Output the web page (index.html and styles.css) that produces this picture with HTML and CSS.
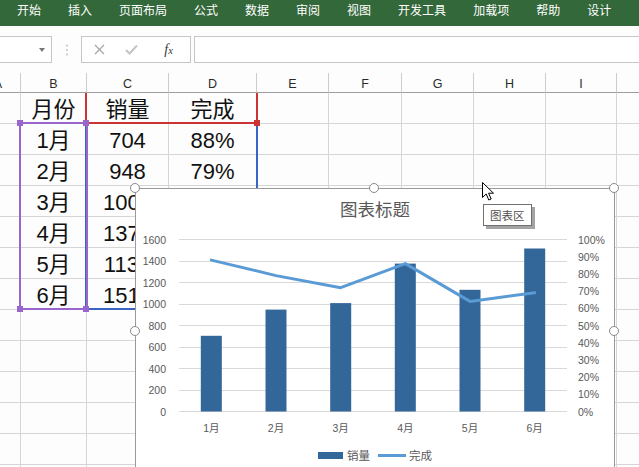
FILE: index.html
```html
<!DOCTYPE html>
<html lang="zh-CN">
<head>
<meta charset="utf-8">
<title>Excel 图表</title>
<link rel="stylesheet" href="styles.css">
</head>
<body>
<div class="ribbon">
  <span>开始</span><span>插入</span><span>页面布局</span><span>公式</span><span>数据</span><span>审阅</span><span>视图</span><span>开发工具</span><span>加载项</span><span>帮助</span><span>设计</span>
</div>
<div class="fbar">
  <div class="namebox"><span class="caret"></span></div>
  <div class="vdots"><svg width="4" height="12" viewBox="0 0 4 12"><circle cx="2" cy="1.5" r="1" /><circle cx="2" cy="6" r="1" /><circle cx="2" cy="10.5" r="1" /></svg></div>
  <div class="fbtns">
    <span class="fbtn"><svg width="11" height="11" viewBox="0 0 11 11"><path d="M1 1L10 10M10 1L1 10" class="ico-x"/></svg></span>
    <span class="fbtn"><svg width="13" height="11" viewBox="0 0 13 11"><path d="M1 6L4.5 9.5L12 1.5" class="ico-ok"/></svg></span>
    <span class="fbtn wide"><span class="fx">f<span class="fxsub">x</span></span></span>
  </div>
  <div class="finput"></div>
</div>
<div class="sheet">
  <div class="grid">
    <div class="ch">A</div><div class="ch">B</div><div class="ch">C</div><div class="ch">D</div><div class="ch">E</div><div class="ch">F</div><div class="ch">G</div><div class="ch">H</div><div class="ch">I</div><div class="ch"></div>

    <div class="c"></div><div class="c">月份</div><div class="c">销量</div><div class="c">完成</div><div class="c"></div><div class="c"></div><div class="c"></div><div class="c"></div><div class="c"></div><div class="c"></div>
    <div class="c"></div><div class="c">1月</div><div class="c">704</div><div class="c">88%</div><div class="c"></div><div class="c"></div><div class="c"></div><div class="c"></div><div class="c"></div><div class="c"></div>
    <div class="c"></div><div class="c">2月</div><div class="c">948</div><div class="c">79%</div><div class="c"></div><div class="c"></div><div class="c"></div><div class="c"></div><div class="c"></div><div class="c"></div>
    <div class="c"></div><div class="c">3月</div><div class="c">1008</div><div class="c">72%</div><div class="c"></div><div class="c"></div><div class="c"></div><div class="c"></div><div class="c"></div><div class="c"></div>
    <div class="c"></div><div class="c">4月</div><div class="c">1376</div><div class="c">86%</div><div class="c"></div><div class="c"></div><div class="c"></div><div class="c"></div><div class="c"></div><div class="c"></div>
    <div class="c"></div><div class="c">5月</div><div class="c">1132</div><div class="c">64%</div><div class="c"></div><div class="c"></div><div class="c"></div><div class="c"></div><div class="c"></div><div class="c"></div>
    <div class="c"></div><div class="c">6月</div><div class="c">1516</div><div class="c">69%</div><div class="c"></div><div class="c"></div><div class="c"></div><div class="c"></div><div class="c"></div><div class="c"></div>
    <div class="c"></div><div class="c"></div><div class="c"></div><div class="c"></div><div class="c"></div><div class="c"></div><div class="c"></div><div class="c"></div><div class="c"></div><div class="c"></div>
    <div class="c"></div><div class="c"></div><div class="c"></div><div class="c"></div><div class="c"></div><div class="c"></div><div class="c"></div><div class="c"></div><div class="c"></div><div class="c"></div>
    <div class="c"></div><div class="c"></div><div class="c"></div><div class="c"></div><div class="c"></div><div class="c"></div><div class="c"></div><div class="c"></div><div class="c"></div><div class="c"></div>
    <div class="c"></div><div class="c"></div><div class="c"></div><div class="c"></div><div class="c"></div><div class="c"></div><div class="c"></div><div class="c"></div><div class="c"></div><div class="c"></div>
    <div class="c"></div><div class="c"></div><div class="c"></div><div class="c"></div><div class="c"></div><div class="c"></div><div class="c"></div><div class="c"></div><div class="c"></div><div class="c"></div>
    <div class="c"></div><div class="c"></div><div class="c"></div><div class="c"></div><div class="c"></div><div class="c"></div><div class="c"></div><div class="c"></div><div class="c"></div><div class="c"></div>
  </div>

  <div class="sel sel-blue"></div>
  <div class="sel sel-red"></div>
  <div class="sel sel-purple"></div>
  <span class="hd hd-purple hp1"></span>
  <span class="hd hd-purple hp2"></span>
  <span class="hd hd-purple hp3"></span>
  <span class="hd hd-purple hp4"></span>
  <span class="hd hd-red hr1"></span>

  <div class="chart">
    <div class="ctitle">图表标题</div>
    <svg class="plot" width="478" height="215" viewBox="0 0 478 215">
      <g class="gridl">
        <line x1="43" x2="431" y1="10.5" y2="10.5"/>
        <line x1="43" x2="431" y1="32" y2="32"/>
        <line x1="43" x2="431" y1="53.5" y2="53.5"/>
        <line x1="43" x2="431" y1="75" y2="75"/>
        <line x1="43" x2="431" y1="96.5" y2="96.5"/>
        <line x1="43" x2="431" y1="118" y2="118"/>
        <line x1="43" x2="431" y1="139.5" y2="139.5"/>
        <line x1="43" x2="431" y1="161" y2="161"/>
        <line x1="43" x2="431" y1="182.5" y2="182.5"/>
      </g>
      <g class="axl">
        <text x="30" y="10.5">1600</text>
        <text x="30" y="32">1400</text>
        <text x="30" y="53.5">1200</text>
        <text x="30" y="75">1000</text>
        <text x="30" y="96.5">800</text>
        <text x="30" y="118">600</text>
        <text x="30" y="139.5">400</text>
        <text x="30" y="161">200</text>
        <text x="30" y="182.5">0</text>
      </g>
      <g class="axr">
        <text x="442" y="10.5">100%</text>
        <text x="442" y="27.7">90%</text>
        <text x="442" y="44.9">80%</text>
        <text x="442" y="62.1">70%</text>
        <text x="442" y="79.3">60%</text>
        <text x="442" y="96.5">50%</text>
        <text x="442" y="113.7">40%</text>
        <text x="442" y="130.9">30%</text>
        <text x="442" y="148.1">20%</text>
        <text x="442" y="165.3">10%</text>
        <text x="442" y="182.5">0%</text>
      </g>
      <g class="bars">
        <rect x="64.8" y="106.8" width="21" height="75.7"/>
        <rect x="129.5" y="80.6" width="21" height="101.9"/>
        <rect x="194.2" y="74.1" width="21" height="108.4"/>
        <rect x="258.8" y="34.6" width="21" height="147.9"/>
        <rect x="323.5" y="60.8" width="21" height="121.7"/>
        <rect x="388.2" y="19.5" width="21" height="163"/>
      </g>
      <polyline class="pline" points="75.3,31.1 140,46.6 204.7,58.7 269.3,34.6 334,72.4 398.7,63.8"/>
      <g class="axx">
        <text x="75.3" y="199">1月</text>
        <text x="140" y="199">2月</text>
        <text x="204.7" y="199">3月</text>
        <text x="269.3" y="199">4月</text>
        <text x="334" y="199">5月</text>
        <text x="398.7" y="199">6月</text>
      </g>
    </svg>
    <div class="legend">
      <span class="lg-bar"></span><span class="lg-t">销量</span>
      <span class="lg-line"></span><span class="lg-t">完成</span>
    </div>
  </div>
  <span class="ch-h h1"></span>
  <span class="ch-h h2"></span>
  <span class="ch-h h3"></span>
  <span class="ch-h h4"></span>
  <span class="ch-h h5"></span>

  <svg class="cursor" width="13" height="20" viewBox="0 0 13 20"><path d="M0.5 0.5L0.5 15.5L4.2 12L6.8 18L9.2 17L6.6 11.2L11.5 11.2Z"/></svg>
  <div class="tip">图表区</div>
</div>
</body>
</html>
```

FILE: styles.css
```css
html, body {
  margin: 0;
  padding: 0;
}
body {
  width: 639px;
  height: 467px;
  overflow: hidden;
  background: #fcfdfc;
  font-family: "Liberation Sans", "Noto Sans CJK SC", sans-serif;
}

/* ribbon */
.ribbon {
  display: flex;
  gap: 27px;
  height: 26px;
  padding-left: 17px;
  background: #33683a;
  color: #ffffff;
  font-family: "Noto Sans CJK SC", sans-serif;
  font-size: 12px;
  line-height: 20px;
  white-space: nowrap;
}

/* formula bar */
.fbar {
  display: flex;
  height: 27px;
  margin-top: 10px;
}
.namebox {
  box-sizing: border-box;
  width: 53px;
  margin-left: -1px;
  border: 1px solid #c6c6c6;
  background: #ffffff;
  display: flex;
  justify-content: flex-end;
  align-items: center;
  padding-right: 6px;
}
.caret {
  width: 0;
  height: 0;
  border-left: 3.5px solid transparent;
  border-right: 3.5px solid transparent;
  border-top: 4px solid #777777;
}
.vdots {
  width: 29px;
  display: flex;
  justify-content: center;
  align-items: center;
}
.vdots svg {
  fill: #c2c2c2;
}
.fbtns {
  box-sizing: border-box;
  width: 110px;
  border: 1px solid #c6c6c6;
  background: #ffffff;
  display: flex;
  padding-left: 2px;
}
.fbtn {
  width: 33px;
  display: flex;
  justify-content: center;
  align-items: center;
}
.fbtn.wide {
  width: 45px;
}
.ico-x {
  stroke: #a6a6a6;
  stroke-width: 1.2;
  fill: none;
}
.ico-ok {
  stroke: #c4c4c4;
  stroke-width: 2;
  fill: none;
}
.fx {
  font-family: "Liberation Serif", serif;
  font-style: italic;
  font-size: 14px;
  color: #3a3a3a;
  line-height: 1;
}
.fxsub {
  font-size: 10.5px;
}
.finput {
  flex: 1;
  margin-left: 3px;
  margin-right: -2px;
  border: 1px solid #c6c6c6;
  background: #ffffff;
}

/* sheet */
.sheet {
  position: relative;
  margin-top: 10px;
  height: 394px;
  overflow: hidden;
}
.grid {
  display: grid;
  grid-template-columns: 45px 66px 82px 88px 72px 73px 72px 72px 71px 100px;
  grid-template-rows: 20px repeat(13, 31px);
  margin-left: -24px;
}
.ch {
  box-sizing: border-box;
  border-right: 1px solid #cccccc;
  border-bottom: 1px solid #9c9c9c;
  text-align: center;
  font-size: 12.5px;
  line-height: 23px;
  overflow: hidden;
  color: #2b2b2b;
}
.c {
  box-sizing: border-box;
  border-right: 1px solid #d6d6d6;
  border-bottom: 1px solid #d6d6d6;
  text-align: center;
  font-size: 22px;
  line-height: 34px;
  color: #111111;
  white-space: nowrap;
  overflow: hidden;
}

/* selection outlines (overlay) */
.sel {
  position: absolute;
  box-sizing: border-box;
}
.sel-blue {
  left: 85px;
  top: 49px;
  width: 173px;
  height: 188px;
  border: 2px solid #3b63c4;
}
.sel-red {
  left: 85px;
  top: 20px;
  width: 173px;
  height: 31px;
  border: 2px solid #cc3333;
  border-top: none;
}
.sel-purple {
  left: 19px;
  top: 49px;
  width: 69px;
  height: 188px;
  border: 2px solid #9966cc;
}
.hd {
  position: absolute;
  width: 6px;
  height: 6px;
}
.hd-purple { background: #9966cc; }
.hd-red { background: #cc3333; }
.hp1 { left: 17px; top: 47px; }
.hp2 { left: 83px; top: 47px; }
.hp3 { left: 17px; top: 233px; }
.hp4 { left: 83px; top: 233px; }
.hr1 { left: 254px; top: 47px; }

/* chart (floating object) */
.chart {
  position: absolute;
  left: 135px;
  top: 115px;
  width: 480px;
  height: 320px;
  box-sizing: border-box;
  border: 1px solid #9a9a9a;
  background: #ffffff;
  display: flex;
  flex-direction: column;
}
.ctitle {
  height: 40px;
  line-height: 40px;
  text-align: center;
  font-family: "Noto Sans CJK SC", sans-serif;
  font-size: 17.5px;
  color: #595959;
}
.plot {
  display: block;
}
.gridl line {
  stroke: #d9d9d9;
  stroke-width: 1;
  shape-rendering: crispEdges;
}
.axl text, .axr text, .axx text {
  font-family: "Liberation Sans", "Noto Sans CJK SC", sans-serif;
  font-size: 10.5px;
  fill: #595959;
  dominant-baseline: central;
}
.axl text { text-anchor: end; }
.axr text { text-anchor: start; }
.axx text { text-anchor: middle; }
.bars rect {
  fill: #336699;
}
.pline {
  fill: none;
  stroke: #5b9bd5;
  stroke-width: 3;
  stroke-linejoin: round;
  stroke-linecap: round;
}
.legend {
  height: 22px;
  display: flex;
  justify-content: center;
  align-items: center;
  font-family: "Noto Sans CJK SC", sans-serif;
  font-size: 11.5px;
  color: #595959;
}
.lg-bar {
  width: 25px;
  height: 7px;
  background: #336699;
  margin-right: 4px;
}
.lg-line {
  width: 28px;
  height: 3px;
  background: #5b9bd5;
  margin-left: 8px;
  margin-right: 3px;
}
.lg-t {
  line-height: 14px;
}

/* chart resize handles */
.ch-h {
  position: absolute;
  box-sizing: border-box;
  width: 10px;
  height: 10px;
  border: 1.5px solid #8a8a8a;
  border-radius: 50%;
  background: #ffffff;
}
.h1 { left: 130px; top: 110px; }
.h2 { left: 369px; top: 110px; }
.h3 { left: 609px; top: 110px; }
.h4 { left: 130px; top: 253px; }
.h5 { left: 609px; top: 253px; }

/* mouse cursor and tooltip */
.cursor {
  position: absolute;
  left: 482px;
  top: 109px;
}
.cursor path {
  fill: #ffffff;
  stroke: #000000;
  stroke-width: 1;
}
.tip {
  position: absolute;
  left: 483px;
  top: 131px;
  box-sizing: border-box;
  width: 49px;
  height: 22px;
  border: 1px solid #707070;
  background: #ffffff;
  box-shadow: 3px 3px 0 #a3a3a3;
  font-family: "Noto Sans CJK SC", sans-serif;
  font-size: 11.5px;
  line-height: 20px;
  padding-left: 6px;
  color: #505050;
}
```
